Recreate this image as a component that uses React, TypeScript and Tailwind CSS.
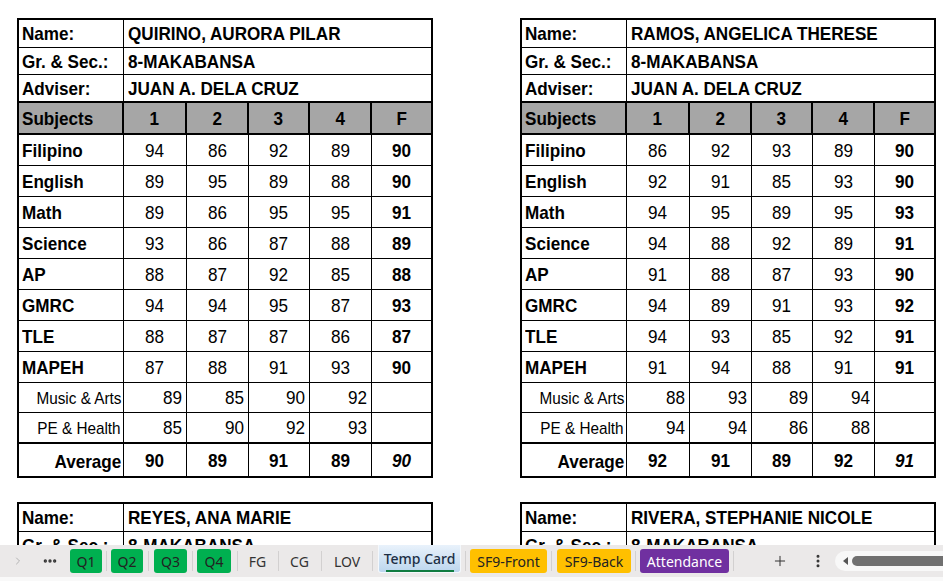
import React from 'react';
import { ChevronRight, Ellipsis, Plus, EllipsisVertical } from 'lucide-react';

type Row = { subject: string; q: number[]; f: number };
type Student = {
  name: string;
  rows: Row[];
  music: number[];
  pe: number[];
  avg: number[];
  final: number;
};

const students: Student[] = [
  {
    name: 'QUIRINO, AURORA PILAR',
    rows: [
      { subject: 'Filipino', q: [94, 86, 92, 89], f: 90 },
      { subject: 'English', q: [89, 95, 89, 88], f: 90 },
      { subject: 'Math', q: [89, 86, 95, 95], f: 91 },
      { subject: 'Science', q: [93, 86, 87, 88], f: 89 },
      { subject: 'AP', q: [88, 87, 92, 85], f: 88 },
      { subject: 'GMRC', q: [94, 94, 95, 87], f: 93 },
      { subject: 'TLE', q: [88, 87, 87, 86], f: 87 },
      { subject: 'MAPEH', q: [87, 88, 91, 93], f: 90 },
    ],
    music: [89, 85, 90, 92],
    pe: [85, 90, 92, 93],
    avg: [90, 89, 91, 89],
    final: 90,
  },
  {
    name: 'RAMOS, ANGELICA THERESE',
    rows: [
      { subject: 'Filipino', q: [86, 92, 93, 89], f: 90 },
      { subject: 'English', q: [92, 91, 85, 93], f: 90 },
      { subject: 'Math', q: [94, 95, 89, 95], f: 93 },
      { subject: 'Science', q: [94, 88, 92, 89], f: 91 },
      { subject: 'AP', q: [91, 88, 87, 93], f: 90 },
      { subject: 'GMRC', q: [94, 89, 91, 93], f: 92 },
      { subject: 'TLE', q: [94, 93, 85, 92], f: 91 },
      { subject: 'MAPEH', q: [91, 94, 88, 91], f: 91 },
    ],
    music: [88, 93, 89, 94],
    pe: [94, 94, 86, 88],
    avg: [92, 91, 89, 92],
    final: 91,
  },
];

const extra = [
  { ...students[0], name: 'REYES, ANA MARIE' },
  { ...students[1], name: 'RIVERA, STEPHANIE NICOLE' },
];

// widths of the quarter columns (the F column takes what is left)
const qw = ['w-[63px]', 'w-[62px]', 'w-[61px]', 'w-[62px]'];

// texto estrecho, como Arial Narrow
const T = ({ children, o = 'origin-left' }: { children: React.ReactNode; o?: string }) => (
  <span className={`inline-block scale-x-90 whitespace-nowrap ${o}`}>{children}</span>
);

const InfoRow = ({ label, value, h, thick }: { label: string; value: string; h: string; thick?: boolean }) => (
  <div className={`flex ${h} border-black ${thick ? 'border-b-2' : 'border-b'}`}>
    <div className="flex w-[105px] items-center border-r border-black pl-[3px]"><T>{label}</T></div>
    <div className="flex flex-1 items-center pl-[4px]"><T>{value}</T></div>
  </div>
);

const ReportCard = ({ s }: { s: Student }) => (
  <div className="w-[416px] border-2 border-black bg-white text-[19px] font-bold leading-none text-black">
    <InfoRow label="Name:" value={s.name} h="h-[28px]" />
    <InfoRow label="Gr. & Sec.:" value="8-MAKABANSA" h="h-[27px]" />
    <InfoRow label="Adviser:" value="JUAN A. DELA CRUZ" h="h-[28px]" thick />

    {/* encabezado gris */}
    <div className="flex h-[32px] border-b-2 border-black bg-[#a6a6a6]">
      <div className="flex w-[105px] items-center border-r-2 border-black pl-[3px] pt-[1px]"><T>Subjects</T></div>
      {['1', '2', '3', '4'].map((n, i) => (
        <div key={n} className={`flex ${qw[i]} items-center justify-center border-r-2 border-black pt-[1px]`}><T o="origin-center">{n}</T></div>
      ))}
      <div className="flex flex-1 items-center justify-center pt-[1px]"><T o="origin-center">F</T></div>
    </div>

    {s.rows.map((r) => (
      <div key={r.subject} className="flex h-[31px] border-b border-black">
        <div className="flex w-[105px] items-center border-r border-black pl-[3px]"><T>{r.subject}</T></div>
        {r.q.map((v, i) => (
          <div key={i} className={`flex ${qw[i]} items-center justify-center border-r border-black font-normal`}><T o="origin-center">{v}</T></div>
        ))}
        <div className="flex flex-1 items-center justify-center"><T o="origin-center">{r.f}</T></div>
      </div>
    ))}

    {[
      { label: 'Music & Arts', vals: s.music, h: 'h-[30px] border-b' },
      { label: 'PE & Health', vals: s.pe, h: 'h-[31px] border-b-2' },
    ].map((m) => (
      <div key={m.label} className={`flex ${m.h} border-black font-normal`}>
        <div className="flex w-[105px] items-center justify-end border-r border-black pr-[2px] pt-[2px] text-[17px]"><T o="origin-right">{m.label}</T></div>
        {m.vals.map((v, i) => (
          <div key={i} className={`flex ${qw[i]} items-center justify-end border-r border-black pr-[4px]`}><T o="origin-right">{v}</T></div>
        ))}
        <div className="flex-1" />
      </div>
    ))}

    <div className="flex h-[32px]">
      <div className="flex w-[105px] items-center justify-end border-r border-black pr-[2px] pt-[2px]"><T o="origin-right">Average</T></div>
      {s.avg.map((v, i) => (
        <div key={i} className={`flex ${qw[i]} items-center justify-center border-r border-black pt-[1px]`}><T o="origin-center">{v}</T></div>
      ))}
      <div className="flex flex-1 items-center justify-center pt-[1px] italic"><T o="origin-center">{s.final}</T></div>
    </div>
  </div>
);

const Sep = () => <div className="h-[20px] w-px bg-[#d2d0d0]" />;

const ColorTab = ({ label, cls }: { label: string; cls: string }) => (
  <div className={`flex h-[24px] items-center justify-center rounded-[3px] ${cls}`}>{label}</div>
);

const App: React.FC = () => {
  return (
    <div className="flex h-[581px] w-[943px] flex-col overflow-hidden bg-white">
      {/* hoja */}
      <div className="flex-1 overflow-hidden font-['Liberation_Sans','Arial',sans-serif]">
        <div className="grid grid-cols-[416px_416px] gap-x-[87px] gap-y-[24px] pl-[17px] pt-[18px]">
          {students.map((s) => (
            <ReportCard key={s.name} s={s} />
          ))}
          {extra.map((s) => (
            <ReportCard key={s.name} s={s} />
          ))}
        </div>
      </div>

      {/* pestañas */}
      <div className="flex h-[36px] shrink-0 flex-col bg-[#f9f9f9] font-['Noto_Sans','Open_Sans',sans-serif] text-[14px] text-[#222]">
        <div className="flex h-[32px] items-center bg-[#ebe9e9]">
          <ChevronRight className="ml-[12px] h-[12px] w-[12px] text-[#a0a0a0]" strokeWidth={1.5} />
          <Ellipsis className="ml-[18px] h-[16px] w-[16px] text-[#333]" strokeWidth={3} />
          <div className="ml-[12px] w-[32px]"><ColorTab label="Q1" cls="bg-[#00b050]" /></div>
          <div className="ml-[4px]"><Sep /></div>
          <div className="ml-[4px] w-[32px]"><ColorTab label="Q2" cls="bg-[#00b050]" /></div>
          <div className="ml-[5px]"><Sep /></div>
          <div className="ml-[5px] w-[33px]"><ColorTab label="Q3" cls="bg-[#00b050]" /></div>
          <div className="ml-[5px]"><Sep /></div>
          <div className="ml-[4px] w-[34px]"><ColorTab label="Q4" cls="bg-[#00b050]" /></div>
          <div className="ml-[6px]"><Sep /></div>
          <div className="ml-[3px] w-[33px] text-center text-[#333]">FG</div>
          <div className="ml-[4px]"><Sep /></div>
          <div className="ml-[3px] w-[35px] text-center text-[#333]">CG</div>
          <div className="ml-[4px]"><Sep /></div>
          <div className="ml-[3px] w-[44px] text-center text-[#333]">LOV</div>
          <div className="ml-[3px]"><Sep /></div>
          <div className="ml-[5px] flex h-[28px] w-[83px] flex-col items-center self-start rounded-b-[3px] border-x border-b border-[#f4f8fc] bg-gradient-to-b from-[#e9f2fb] to-[#bcd6ee] pt-[3px]">
            <span className="font-medium text-[#1d2f45]">Temp Card</span>
            <div className="mt-[1px] h-[2px] w-[68px] bg-[#107c41]" />
          </div>
          <div className="ml-[4px]"><Sep /></div>
          <div className="ml-[4px] w-[77px]"><ColorTab label="SF9-Front" cls="bg-[#ffc000]" /></div>
          <div className="ml-[4px]"><Sep /></div>
          <div className="ml-[5px] w-[74px]"><ColorTab label="SF9-Back" cls="bg-[#ffc000]" /></div>
          <div className="ml-[4px]"><Sep /></div>
          <div className="ml-[4px] w-[89px]"><ColorTab label="Attendance" cls="bg-[#7030a0] text-white" /></div>
          <div className="ml-[4px]"><Sep /></div>
          <Plus className="ml-[38px] h-[16px] w-[16px] text-[#333]" strokeWidth={1.5} />
          <EllipsisVertical className="ml-[22px] h-[16px] w-[16px] text-[#333]" strokeWidth={2.5} />
          <div className="ml-[9px] flex h-[20px] flex-1 items-center rounded-l-full bg-[#f8f8f8] pl-[8px]">
            <div className="h-0 w-0 border-y-[4px] border-r-[5px] border-y-transparent border-r-[#555]" />
            <div className="ml-[4px] h-[10px] flex-1 rounded-l-full bg-[#707070]" />
          </div>
        </div>
      </div>
    </div>
  );
};

export default App;
